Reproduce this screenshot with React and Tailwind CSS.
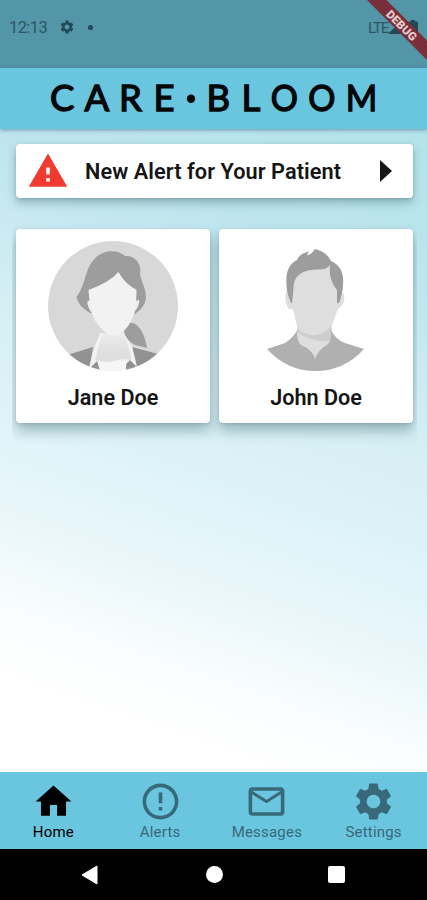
import React from "react";

const ICONS = {
  gear: "M19.14 12.94c.04-.3.06-.61.06-.94 0-.32-.02-.64-.07-.94l2.03-1.58c.18-.14.23-.41.12-.61l-1.92-3.32c-.12-.22-.37-.29-.59-.22l-2.39.96c-.5-.38-1.03-.7-1.62-.94l-.36-2.54c-.04-.24-.24-.41-.48-.41h-3.84c-.24 0-.43.17-.47.41l-.36 2.54c-.59.24-1.13.57-1.62.94l-2.39-.96c-.22-.08-.47 0-.59.22L2.74 8.87c-.12.21-.08.47.12.61l2.03 1.58c-.05.3-.09.63-.09.94s.02.64.07.94l-2.03 1.58c-.18.14-.23.41-.12.61l1.92 3.32c.12.22.37.29.59.22l2.39-.96c.5.38 1.03.7 1.62.94l.36 2.54c.05.24.24.41.48.41h3.84c.24 0 .44-.17.47-.41l.36-2.54c.59-.24 1.13-.56 1.62-.94l2.39.96c.22.08.47 0 .59-.22l1.92-3.32c.12-.22.07-.47-.12-.61l-2.01-1.58zM12 15.6c-1.98 0-3.6-1.62-3.6-3.6s1.62-3.6 3.6-3.6 3.6 1.62 3.6 3.6-1.62 3.6-3.6 3.6z",
  tabGear: "M19.43 12.98c.04-.32.07-.64.07-.98s-.03-.66-.07-.98l2.11-1.65c.19-.15.24-.42.12-.64l-2-3.460c-.12-.22-.39-.3-.61-.22l-2.490 1c-.52-.4-1.080-.73-1.690-.98l-.38-2.650C14.460 2.180 14.250 2 14 2h-4c-.25 0-.46.18-.49.42l-.38 2.650c-.61.25-1.170.59-1.690.98l-2.490-1c-.23-.09-.49 0-.61.22l-2 3.460c-.13.22-.07.49.12.64l2.110 1.650c-.04.32-.07.65-.07.98s.03.66.07.98l-2.110 1.650c-.19.15-.24.42-.12.64l2 3.460c.12.22.39.3.61.22l2.490-1c.52.4 1.080.73 1.690.98l.38 2.650c.03.24.24.42.49.42h4c.25 0 .46-.18.49-.42l.38-2.650c.61-.25 1.170-.59 1.690-.98l2.490 1c.23.09.49 0 .61-.22l2-3.460c.12-.22.07-.49-.12-.64l-2.110-1.650zM12 15.800c-2.100 0-3.800-1.700-3.800-3.800s1.700-3.800 3.800-3.800 3.800 1.700 3.800 3.800-1.700 3.800-3.800 3.800z",
  home: "M10 20v-6h4v6h5v-8h3L12 3 2 12h3v8z",
  alert: "M11 15h2v2h-2zm0-8h2v6h-2zm.99-5C6.47 2 2 6.48 2 12s4.47 10 9.99 10C17.52 22 22 17.52 22 12S17.52 2 11.99 2zM12 20c-4.42 0-8-3.58-8-8s3.58-8 8-8 8 3.58 8 8-3.58 8-8 8z",
  mail: "M20 4H4c-1.1 0-1.99.9-1.99 2L2 18c0 1.1.9 2 2 2h16c1.1 0 2-.9 2-2V6c0-1.1-.9-2-2-2zm0 14H4V8l8 5 8-5v10zm-8-7L4 6h16l-8 5z",
  warning: "M1 21h22L12 2 1 21zm12-3h-2v-2h2v2zm0-4h-2v-4h2v4z",
};

function Icon({ name, className }) {
  return (
    <svg viewBox="0 0 24 24" fill="currentColor" className={className}>
      <path d={ICONS[name]} />
    </svg>
  );
}

function StatusBar() {
  return (
    <div className="relative flex h-[68px] shrink-0 items-start bg-[#5296a8] text-[#2b5664]">
      <span className="ml-[9px] mt-[17px] w-[38px] whitespace-nowrap text-[16.500px] leading-[22px] tracking-[-0.6px]">12:13</span>
      <Icon name="gear" className="ml-[12px] mt-[19px] h-4 w-4 text-[#204855]" />
      <span className="ml-[13px] mt-[25px] h-[5px] w-[5px] rounded-full bg-[#204855]" />
      <span className="ml-auto mt-[17px] text-[15px] leading-[22px] tracking-[-1.200px]">LTE</span>
      <svg viewBox="0 0 38 22" className="mr-[1px] mt-[15px] h-[22px] w-[38px]" fill="#234754">
        <path d="M0 19 15 4v15zM20 19V8q0-1.500 1.500-1.500H23V5h4v1.500h1.500Q30 6.500 30 8v11z" />
      </svg>
      <svg viewBox="0 0 62 62" className="absolute right-0 top-0 h-[62px] w-[62px] overflow-visible">
        <path d="M2 0h19.500L62 40.500V60z" fill="#792f3a" />
        <text
          transform="translate(36.500 25.500) rotate(45)"
          textAnchor="middle"
          y="4"
          fontSize="11.500"
          fontWeight="900"
          fill="#e6cccc"
          textLength="38"
          lengthAdjust="spacingAndGlyphs"
        >
          DEBUG
        </text>
      </svg>
    </div>
  );
}

function Header() {
  return (
    <header className="relative z-10 h-[61px] shrink-0 bg-[#6ac5df] shadow-[0_1px_4px_rgba(50,80,120,0.55)]">
      <svg viewBox="0 0 427 61" className="h-[61px] w-full">
        <g fontFamily="Lato, sans-serif" fontSize="36.500" fill="#050708" stroke="#050708" strokeWidth="1.400">
          <text y="43" x="50 84.500 119 153.500">CARE</text>
          <text y="43" x="206.500 241.500">BL</text>
          <text y="43" transform="translate(270.700 0) scale(0.93 1)">O</text>
          <text y="43" transform="translate(308.200 0) scale(0.93 1)">O</text>
          <text y="43" transform="translate(345.800 0) scale(0.93 1)">M</text>
        </g>
        <circle cx="191" cy="30.700" r="4.200" fill="#050708" />
      </svg>
    </header>
  );
}

function JaneAvatar() {
  return (
    <svg viewBox="0 0 130 130" className="h-[130px] w-[130px]">
      <defs>
        <clipPath id="jane-circle"><circle cx="65" cy="65" r="65" /></clipPath>
        <linearGradient id="jane-neck" x1="0" y1="0" x2="0" y2="1">
          <stop offset="0" stopColor="#ececec" />
          <stop offset="0.7" stopColor="#dedede" />
        </linearGradient>
      </defs>
      <g clipPath="url(#jane-circle)">
        <rect width="130" height="130" fill="#d8d8d8" />
        <path d="M80 82C91 79 97 95 99 107L87 104Q77 99 76 89Z" fill="#9d9d9d" />
        <path d="M16 115 45 106 41 130H14ZM84 106 114 114 112 130H88Z" fill="#929292" />
        <path d="M52 92 47 105 40 130H90L84 105 76 93Z" fill="#f2f2f2" />
        <path d="M54 92 47 119Q56 122 65 120Q75 117 84 119L76 92Z" fill="url(#jane-neck)" />
        <path d="M43 126 49 120 52 130H42ZM78 123 82 119 88 125 84 130H78Z" fill="#929292" />
        <path d="M51 120Q58 124 65 121L66 130H53ZM66 121 79 120 77 130H67Z" fill="#f6f6f6" />
        <path d="M42 72Q30 65 28.500 56C35 47 36 39 40 28C46 14 57 8 70 11Q75 13 77 15C88 14 94 24 92 33C94 42 98 48 98 57C97 65 91 71 82 76Z" fill="#9d9d9d" />
        <path d="M42 60Q38 59 40 65L43 72ZM88 60Q92 57 91 62Q89 70 85 71Z" fill="#ededed" />
        <path d="M40.500 49Q62 41 70.500 31Q76 42 88.500 49L88 65Q86 80 75 91Q66 98 57 91Q45 81 42 66Z" fill="#f2f2f2" />
      </g>
    </svg>
  );
}

function JohnAvatar() {
  return (
    <svg viewBox="0 0 130 130" className="h-[130px] w-[130px]">
      <path d="M35 51Q33 60 37 67Q39 69 42 68L46 85V112L64 122 81 109V84L87 68Q95 63 93 53L87 51 84 23 44 28Z" fill="#dedede" />
      <path d="M46 87Q53 94 62 94Q73 94 80 85V99Q70 102 61 98Q52 96 46 91Z" fill="#cdcdcd" />
      <path d="M16 108 34 102Q42 97 46 89.500Q46 101 50 104Q62 109 64 118Q67 109 76 104Q81 100 80 89Q85 99 94 102L113 108Q93 130 64.500 130Q36 130 16 108Z" fill="#b0b0b0" />
      <path d="M40 62Q34.500 50 35.500 37C36 27 40 22 46 19Q49 12 58 10.500L56 14Q60 14 64 8Q76 11 80 20C91 25 93 35 92 43Q92 52 88 62H86V49C80 41 78 34 79 24Q76 28 70 28.500C50 28 43 35 42.500 47Q42 55 41 62Z" fill="#9d9d9d" />
    </svg>
  );
}

function PatientCard({ name, children }) {
  return (
    <article className="flex h-[193.500px] w-[194px] flex-col items-center rounded-[4px] bg-white pt-[12px] shadow-[0_8px_13px_rgba(45,90,95,0.38),0_1px_3px_rgba(40,80,90,0.2)]">
      {children}
      <h2 className="mt-[13px] whitespace-nowrap text-[21.600px] font-semibold leading-[28px] text-[#151515]">{name}</h2>
    </article>
  );
}

const TABS = [
  { label: "Home", icon: "home", active: true },
  { label: "Alerts", icon: "alert" },
  { label: "Messages", icon: "mail" },
  { label: "Settings", icon: "tabGear" },
];

export default function App() {
  return (
    <div className="flex h-[900px] w-[427px] flex-col overflow-hidden font-[Roboto,sans-serif]">
      <StatusBar />
      <Header />
      <main className="flex-1 bg-[linear-gradient(199deg,#b3e3eb_0%,#bee5ee_20%,#d5eef4_40%,#e0f4f9_57%,#eaf7fa_68%,#f9fdfe_79%,#ffffff_88%)] pt-[15px]">
        <section className="ml-4 flex h-[54px] w-[396.500px] items-center rounded-[4px] bg-white shadow-[0_5px_10px_rgba(45,90,95,0.35),0_1px_3px_rgba(40,80,90,0.2)]">
          <Icon name="warning" className="ml-[11px] h-[42px] w-[42px] text-[#f13b30]" />
          <span className="ml-4 whitespace-nowrap pt-[2px] text-[21.700px] font-semibold tracking-[0.080px] text-[#151515]">New Alert for Your Patient</span>
          <svg viewBox="0 0 12 22" className="ml-auto mr-[21px] h-[22px] w-[12px]" fill="#151515">
            <path d="M0 0 12 11 0 22z" />
          </svg>
        </section>
        <section className="ml-[12px] mt-[26px] flex h-[222px] w-[405px] gap-[9px] overflow-hidden pl-[4px] pt-[5px]">
          <PatientCard name="Jane Doe"><JaneAvatar /></PatientCard>
          <PatientCard name="John Doe"><JohnAvatar /></PatientCard>
        </section>
      </main>
      <nav className="grid h-[77px] shrink-0 grid-cols-4 bg-[#6ac5df]">
        {TABS.map((tab) => (
          <div
            key={tab.label}
            className={
              tab.active
                ? "flex flex-col items-center pt-[8px] text-black"
                : "flex flex-col items-center pt-[8px] text-[#37697a]"
            }
          >
            <Icon name={tab.icon} className="h-[43px] w-[43px]" />
            <span className="text-[15px] leading-[18px] tracking-[0.2px]">{tab.label}</span>
          </div>
        ))}
      </nav>
      <footer className="flex h-[51px] shrink-0 items-center bg-black pl-[81px]">
        <svg viewBox="0 0 17 20" className="h-[20px] w-[17px]" fill="white"><path d="M16 1v18L1 10z" stroke="white" strokeLinejoin="round" /></svg>
        <span className="ml-[108px] h-[17px] w-[17px] rounded-full bg-white" />
        <span className="ml-[105px] h-[17px] w-[17px] rounded-[2px] bg-white" />
      </footer>
    </div>
  );
}
